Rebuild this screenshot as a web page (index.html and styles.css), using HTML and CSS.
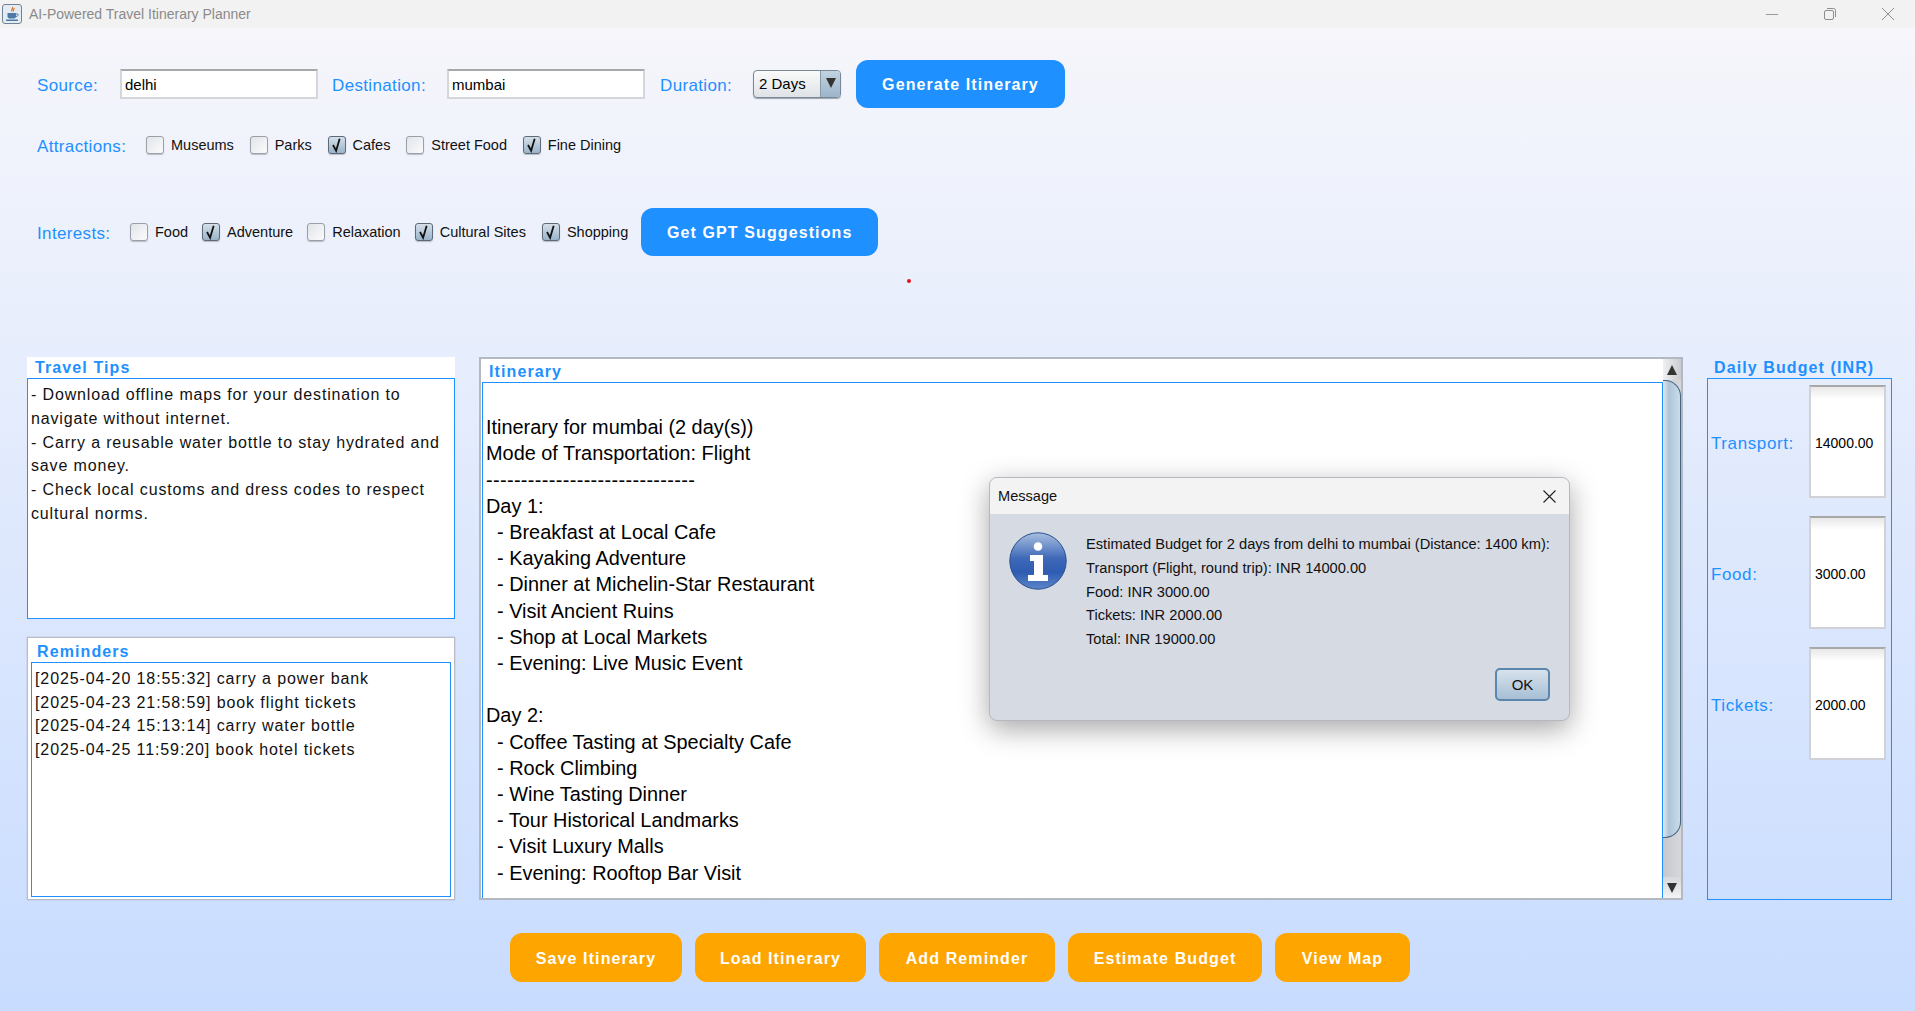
FILE: index.html
```html
<!DOCTYPE html>
<html lang="en">
<head>
    <meta charset="UTF-8">
    <title>AI-Powered Travel Itinerary Planner</title>
    <link rel="stylesheet" href="styles.css">
</head>
<body>
    <!-- Title bar -->
    <div class="titlebar">
        <svg class="app-icon" width="20" height="20" viewBox="0 0 20 20">
            <rect x="0.5" y="0.5" width="19" height="19" rx="2.5" fill="#e4ebf3" stroke="#6f8296"/>
            <path d="M10.5 3c1 1.5-2 2.5-.5 4.5M12 4c.5 1.2-1.5 2-.5 3.5" fill="none" stroke="#e0701c" stroke-width="1.2"/>
            <path d="M5.5 9h8.5v3.5c0 1.5-1.5 2-2.5 2h-3.500c-1 0-2.500-.5-2.500-2z" fill="#4d7aa6"/>
            <path d="M14 10h1.500c1 0 1 2.500-1.500 2.500" fill="none" stroke="#4d7aa6"/>
            <rect x="4" y="15.500" width="12" height="1.500" fill="#4d7aa6"/>
        </svg>
        <span class="app-title">AI-Powered Travel Itinerary Planner</span>
        <div class="window-controls">
            <svg width="12" height="12" viewBox="0 0 12 12"><path d="M0 6.500h12" stroke="#9a9a9a"/></svg>
            <svg width="12" height="12" viewBox="0 0 12 12" fill="none" stroke="#8e8e8e"><rect x="0.500" y="2.500" width="9" height="9" rx="1.500"/><path d="M3 .5h6.500a2 2 0 0 1 2 2V9"/></svg>
            <svg width="12" height="12" viewBox="0 0 12 12"><path d="M0 0l12 12M12 0L0 12" stroke="#8e8e8e"/></svg>
        </div>
    </div>

    <!-- Form rows -->
    <div class="filters">
        <div class="row row-route">
            <span class="field-label label-source">Source:</span>
            <input class="text-input" type="text" value="delhi">
            <span class="field-label label-destination">Destination:</span>
            <input class="text-input" type="text" value="mumbai">
            <span class="field-label label-duration">Duration:</span>
            <div class="combo">
                <span class="combo-value">2 Days</span>
                <span class="combo-arrow"><span class="tri-down"></span></span>
            </div>
            <button class="btn btn-blue btn-generate">Generate Itinerary</button>
        </div>

        <div class="row row-attractions">
            <span class="field-label label-attractions">Attractions:</span>
            <label class="check"><span class="box"></span>Museums</label>
            <label class="check"><span class="box"></span>Parks</label>
            <label class="check"><span class="box checked"><svg viewBox="0 0 18 18"><path d="M4.500 9l3.500 6.500 4-13.500" fill="none" stroke="#111" stroke-width="2"/></svg></span>Cafes</label>
            <label class="check"><span class="box"></span>Street Food</label>
            <label class="check"><span class="box checked"><svg viewBox="0 0 18 18"><path d="M4.500 9l3.500 6.500 4-13.500" fill="none" stroke="#111" stroke-width="2"/></svg></span>Fine Dining</label>
        </div>

        <div class="row row-interests">
            <span class="field-label label-interests">Interests:</span>
            <label class="check"><span class="box"></span>Food</label>
            <label class="check"><span class="box checked"><svg viewBox="0 0 18 18"><path d="M4.500 9l3.500 6.500 4-13.500" fill="none" stroke="#111" stroke-width="2"/></svg></span>Adventure</label>
            <label class="check"><span class="box"></span>Relaxation</label>
            <label class="check check-cultural"><span class="box checked"><svg viewBox="0 0 18 18"><path d="M4.500 9l3.500 6.500 4-13.500" fill="none" stroke="#111" stroke-width="2"/></svg></span>Cultural Sites</label>
            <label class="check"><span class="box checked"><svg viewBox="0 0 18 18"><path d="M4.500 9l3.500 6.500 4-13.500" fill="none" stroke="#111" stroke-width="2"/></svg></span>Shopping</label>
            <button class="btn btn-blue btn-gpt">Get GPT Suggestions</button>
        </div>
    </div>

    <span class="red-dot"></span>

    <!-- Panels -->
    <div class="panels">
        <div class="left-col">
            <section class="tips">
                <h2 class="panel-title tips-title">Travel Tips</h2>
                <div class="tips-body">- Download offline maps for your destination to navigate without internet.<br>- Carry a reusable water bottle to stay hydrated and save money.<br>- Check local customs and dress codes to respect cultural norms.</div>
            </section>
            <section class="reminders">
                <h2 class="panel-title reminders-title">Reminders</h2>
                <div class="reminders-body">
                    <div>[2025-04-20 18:55:32] carry a power bank</div>
                    <div>[2025-04-23 21:58:59] book flight tickets</div>
                    <div>[2025-04-24 15:13:14] carry water bottle</div>
                    <div>[2025-04-25 11:59:20] book hotel tickets</div>
                </div>
            </section>
        </div>

        <section class="itinerary">
            <div class="itinerary-main">
                <h2 class="panel-title itinerary-title">Itinerary</h2>
                <pre class="itinerary-body">

Itinerary for mumbai (2 day(s))
Mode of Transportation: Flight
<span class="dashes">------------------------------</span>
Day 1:
  - Breakfast at Local Cafe
  - Kayaking Adventure
  - Dinner at Michelin-Star Restaurant
  - Visit Ancient Ruins
  - Shop at Local Markets
  - Evening: Live Music Event

Day 2:
  - Coffee Tasting at Specialty Cafe
  - Rock Climbing
  - Wine Tasting Dinner
  - Tour Historical Landmarks
  - Visit Luxury Malls
  - Evening: Rooftop Bar Visit</pre>
            </div>
            <div class="scrollbar">
                <div class="scroll-btn"><span class="tri-up"></span></div>
                <div class="scroll-thumb"></div>
                <div class="scroll-track"></div>
                <div class="scroll-btn scroll-btn-down"><span class="tri-down"></span></div>
            </div>
        </section>

        <section class="budget">
            <h2 class="panel-title budget-title">Daily Budget (INR)</h2>
            <div class="budget-body">
                <div class="budget-row"><span class="budget-label">Transport:</span><div class="budget-value">14000.00</div></div>
                <div class="budget-row"><span class="budget-label">Food:</span><div class="budget-value">3000.00</div></div>
                <div class="budget-row"><span class="budget-label">Tickets:</span><div class="budget-value">2000.00</div></div>
            </div>
        </section>
    </div>

    <!-- Bottom buttons -->
    <div class="actions">
        <button class="btn btn-orange btn-save">Save Itinerary</button>
        <button class="btn btn-orange btn-load">Load Itinerary</button>
        <button class="btn btn-orange btn-reminder">Add Reminder</button>
        <button class="btn btn-orange btn-estimate">Estimate Budget</button>
        <button class="btn btn-orange btn-map">View Map</button>
    </div>

    <!-- Message dialog -->
    <div class="dialog">
        <div class="dialog-head">
            <span>Message</span>
            <svg width="13" height="13" viewBox="0 0 13 13"><path d="M.5.500l12 12M12.500.500l-12 12" stroke="#222" stroke-width="1.100"/></svg>
        </div>
        <div class="dialog-content">
            <svg class="info-icon" width="58" height="58" viewBox="0 0 58 58">
                <defs>
                    <linearGradient id="infoFill" x1="0" y1="0" x2="0" y2="1">
                        <stop offset="0" stop-color="#a9bfe0"/>
                        <stop offset="0.45" stop-color="#3f69b8"/>
                        <stop offset="0.7" stop-color="#2e5cb2"/>
                        <stop offset="1" stop-color="#5c86c8"/>
                    </linearGradient>
                </defs>
                <circle cx="29" cy="29" r="28.200" fill="url(#infoFill)" stroke="#27508f"/>
                <circle cx="29" cy="14.500" r="4.300" fill="#fff"/>
                <path d="M21 23h13v20h5v6H19v-6h6V29h-4z" fill="#fff"/>
            </svg>
            <div class="dialog-text">
                <div>Estimated Budget for 2 days from delhi to mumbai (Distance: 1400 km):</div>
                <div>Transport (Flight, round trip): INR 14000.00</div>
                <div>Food: INR 3000.00</div>
                <div>Tickets: INR 2000.00</div>
                <div>Total: INR 19000.00</div>
            </div>
        </div>
        <button class="ok-btn">OK</button>
    </div>
</body>
</html>
```

FILE: styles.css
```css
* {
    box-sizing: border-box;
}
body {
    margin: 0;
    width: 1915px;
    height: 1011px;
    overflow: hidden;
    position: relative;
    font-family: "Liberation Sans", Arial, sans-serif;
    background: linear-gradient(#f6f6fb 28px, #c8dcff);
}

/* title bar */
.titlebar {
    height: 28px;
    background-color: #f2f2f2;
    display: flex;
    align-items: center;
    padding-left: 2px;
}
.app-icon {
    margin-right: 7px;
}
.app-title {
    font-size: 14px;
    color: #8a8a8a;
}
.window-controls {
    margin-left: auto;
    margin-right: 21px;
    display: flex;
    gap: 46px;
}

/* form */
.filters {
    padding: 32px 0 0 37px;
}
.row {
    display: flex;
    align-items: center;
}
.row-route {
    height: 48px;
}
.row-attractions {
    height: 18px;
    margin-top: 28px;
}
.row-interests {
    height: 49px;
    margin-top: 53px;
}
.field-label {
    font-size: 17px;
    letter-spacing: 0.35px;
    color: #1e90ff;
}
.row-route .field-label {
    padding-top: 4px;
}
.row-attractions .field-label {
    padding-top: 4px;
}
.row-interests .field-label {
    padding-top: 4px;
}
.label-source {
    width: 83px;
}
.label-destination {
    width: 115px;
    margin-left: 14px;
}
.label-duration {
    width: 93px;
    margin-left: 15px;
}
.label-attractions {
    width: 109px;
}
.label-interests {
    width: 93px;
}
.text-input {
    width: 198px;
    height: 30px;
    padding: 0 3px;
    font-family: inherit;
    font-size: 15px;
    color: #000;
    background-color: #fff;
    border: 2px solid #d4d6da;
    border-top-color: #a8a8a8;
    outline: none;
}
.combo {
    width: 88px;
    height: 28px;
    display: flex;
    border: 1px solid #7b8794;
    border-radius: 4px;
    overflow: hidden;
    background: linear-gradient(#fafafa, #dfe2e6);
    box-shadow: 0 1px 1px #9aa3ad;
    font-size: 15px;
}
.combo-value {
    flex: 1;
    padding-left: 5px;
    line-height: 26px;
}
.combo-arrow {
    width: 20px;
    display: flex;
    justify-content: center;
    padding-top: 7px;
    background: linear-gradient(#c2d2e0, #9db5cb);
    border-left: 1px solid #8a99a8;
}
.tri-down {
    width: 0;
    height: 0;
    border-left: 5px solid transparent;
    border-right: 5px solid transparent;
    border-top: 10px solid #333;
}
.tri-up {
    width: 0;
    height: 0;
    border-left: 5px solid transparent;
    border-right: 5px solid transparent;
    border-bottom: 10px solid #333;
}
.check {
    display: flex;
    align-items: center;
    font-size: 14.5px;
    color: #111;
    margin-right: 15.8px;
}
.row-interests .check {
    margin-right: 14px;
}
.row-interests .check-cultural {
    margin-right: 16px;
}
.box {
    width: 18px;
    height: 18px;
    margin-right: 7px;
    border: 1px solid #9a9fa8;
    border-radius: 3px;
    background: linear-gradient(135deg, #e2e4e9, #fbfbfc);
    box-shadow: 0 1px 1px #b9bdc4;
}
.box.checked {
    border-color: #5d6976;
    background: linear-gradient(#d5e0ea, #9bb3c9);
}
.box svg {
    display: block;
    width: 16px;
    height: 16px;
}
.btn {
    border: none;
    border-radius: 12px;
    color: #fff;
    font-family: inherit;
    font-size: 16px;
    font-weight: bold;
    letter-spacing: 1.1px;
    padding: 2px 0 0;
}
.btn-blue {
    background-color: #1e90ff;
    height: 48px;
}
.btn-orange {
    background-color: #ffa500;
    height: 49px;
}
.btn-generate {
    width: 209px;
    margin-left: 15px;
}
.btn-gpt {
    width: 237px;
    margin-left: -1px;
}
.red-dot {
    position: absolute;
    left: 907px;
    top: 279px;
    width: 4px;
    height: 4px;
    border-radius: 50%;
    background-color: #e5141c;
}

/* panels */
.panels {
    display: flex;
    gap: 24px;
    margin-top: 101px;
    padding-left: 27px;
    height: 543px;
}
.panel-title {
    margin: 0;
    font-size: 16px;
    line-height: 21px;
    font-weight: bold;
    letter-spacing: 1.1px;
    color: #1e90ff;
}
.left-col {
    width: 428px;
    display: flex;
    flex-direction: column;
    gap: 18px;
}
.tips {
    height: 262px;
    display: flex;
    flex-direction: column;
    background-color: #fff;
}
.tips-title {
    padding-left: 8px;
}
.tips-body {
    flex: 1;
    border: 1px solid #1e90ff;
    padding: 4px 3px;
    font-size: 16px;
    line-height: 23.8px;
    letter-spacing: 0.85px;
    color: #111;
}
.reminders {
    height: 263px;
    display: flex;
    flex-direction: column;
    padding: 2px 3px;
    background-color: #fff;
    border: 1px solid #b9bcc4;
    box-shadow: 0 0 1px #9a9da6;
}
.reminders-title {
    padding-left: 6px;
    padding-top: 2px;
    height: 22px;
    line-height: 19px;
}
.reminders-body {
    flex: 1;
    border: 1px solid #1e90ff;
    padding: 4px 3px;
    font-size: 16px;
    line-height: 23.7px;
    letter-spacing: 0.9px;
    color: #111;
}
.itinerary {
    width: 1204px;
    display: flex;
    background-color: #fff;
    border: 2px solid #b4b8c2;
    border-bottom-width: 2px;
}
.itinerary-main {
    width: 1182px;
    display: flex;
    flex-direction: column;
    padding-left: 1px;
}
.itinerary-title {
    padding-left: 7px;
    height: 23px;
    line-height: 25px;
}
.itinerary-body {
    flex: 1;
    margin: 0;
    border: 1px solid #1e90ff;
    border-bottom: none;
    padding: 5px 3px 0;
    font-family: inherit;
    font-size: 19.9px;
    line-height: 26.2px;
    color: #000;
}
.dashes {
    letter-spacing: 0.35px;
}
.scrollbar {
    width: 18px;
    display: flex;
    flex-direction: column;
    background: linear-gradient(90deg, #c6c8cf, #d6d8dc);
}
.scroll-btn {
    height: 21px;
    display: flex;
    justify-content: center;
    align-items: center;
    background: linear-gradient(90deg, #eef0f2, #c8cbd0);
}
.scroll-btn-down {
    background: linear-gradient(#d6d8dc, #f2f3f5);
}
.scroll-thumb {
    height: 458px;
    border: 1px solid #45647f;
    border-width: 1px 1px 1px 0;
    border-radius: 0 16px 16px 0;
    background: linear-gradient(90deg, #e2e8ee, #aec4d8 35%, #c9dcea);
}
.scroll-track {
    flex: 1;
}
.budget {
    width: 185px;
    display: flex;
    flex-direction: column;
}
.budget-title {
    padding: 1px 0 0 7px;
    height: 21px;
    line-height: 20px;
}
.budget-body {
    flex: 1;
    border: 1px solid #1e90ff;
    padding: 6px 5px 0 3px;
}
.budget-row {
    height: 113px;
    margin-bottom: 18px;
    display: flex;
    align-items: center;
    justify-content: space-between;
}
.budget-label {
    padding-top: 4px;
    font-size: 17px;
    letter-spacing: 0.6px;
    color: #1e90ff;
}
.budget-value {
    width: 77px;
    height: 100%;
    display: flex;
    align-items: center;
    padding: 2px 0 0 4px;
    font-size: 14px;
    border: 2px solid #d0d2d6;
    border-top-color: #a8a8a8;
    background: linear-gradient(#e8e8e8, #fff 12px);
}

/* bottom buttons */
.actions {
    display: flex;
    justify-content: flex-start;
    gap: 13px;
    margin-top: 33px;
    padding-left: 510px;
}
.btn-save {
    width: 172px;
}
.btn-load {
    width: 171px;
}
.btn-reminder {
    width: 176px;
}
.btn-estimate {
    width: 194px;
}
.btn-map {
    width: 135px;
}

/* dialog */
.dialog {
    position: absolute;
    left: 989px;
    top: 477px;
    width: 581px;
    height: 244px;
    border: 1px solid #b5b8be;
    border-radius: 8px;
    overflow: hidden;
    background-color: #d6dae3;
    box-shadow: 0 8px 28px rgba(0, 0, 0, 0.35);
    font-size: 14.65px;
    color: #111;
}
.dialog-head {
    height: 36px;
    padding: 0 13px 0 8px;
    display: flex;
    align-items: center;
    justify-content: space-between;
    background-color: #f3f3f3;
    font-size: 14.6px;
}
.dialog-content {
    display: flex;
    padding: 18px 0 0 19px;
}
.info-icon {
    flex: none;
    margin-right: 19px;
}
.dialog-text {
    margin-top: 1px;
    line-height: 23.8px;
}
.ok-btn {
    position: absolute;
    right: 19px;
    bottom: 19px;
    width: 55px;
    height: 33px;
    border: 2px solid #5b86ad;
    border-radius: 5px;
    background: linear-gradient(#d7e2ec, #a7bfd5);
    font-family: inherit;
    font-size: 15px;
    color: #111;
}
```
